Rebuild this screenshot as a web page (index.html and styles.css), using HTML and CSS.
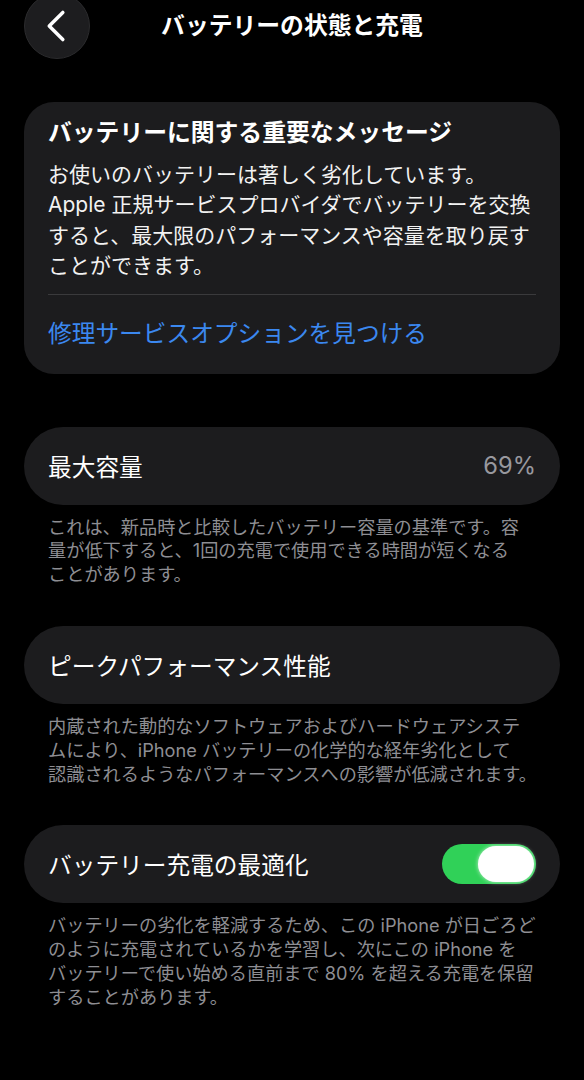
FILE: index.html
```html
<!DOCTYPE html>
<html lang="ja">
<head>
<meta charset="UTF-8">
<meta name="viewport" content="width=device-width, initial-scale=1.0">
<title>バッテリーの状態と充電</title>
<link rel="stylesheet" href="styles.css">
</head>
<body>
<header class="nav">
  <button class="back" aria-label="戻る">
    <svg viewBox="0 0 66 66" width="66" height="66"><path d="M39 19 L25 33 L39 47" fill="none" stroke="#fff" stroke-width="3.6" stroke-linecap="round" stroke-linejoin="round"/></svg>
  </button>
  <h1 class="nav-title">バッテリーの状態と充電</h1>
  <span></span>
</header>
<main class="content">
  <section class="card message">
    <h2>バッテリーに関する重要なメッセージ</h2>
    <p>お使いのバッテリーは著しく劣化しています。<br>Apple 正規サービスプロバイダでバッテリーを交換<br>すると、最大限のパフォーマンスや容量を取り戻す<br>ことができます。</p>
    <hr>
    <a class="link" href="#">修理サービスオプションを見つける</a>
  </section>

  <section class="group">
    <div class="card row"><span>最大容量</span><span class="value">69%</span></div>
    <p class="footnote">これは、新品時と比較したバッテリー容量の基準です。容<br>量が低下すると、1回の充電で使用できる時間が短くなる<br>ことがあります。</p>
  </section>

  <section class="group">
    <div class="card row"><span>ピークパフォーマンス性能</span></div>
    <p class="footnote">内蔵された動的なソフトウェアおよびハードウェアシステ<br>ムにより、iPhone バッテリーの化学的な経年劣化として<br>認識されるようなパフォーマンスへの影響が低減されます。</p>
  </section>

  <section class="group">
    <div class="card row">
      <span>バッテリー充電の最適化</span>
      <span class="switch"><span class="knob"></span></span>
    </div>
    <p class="footnote">バッテリーの劣化を軽減するため、この iPhone が日ごろど<br>のように充電されているかを学習し、次にこの iPhone を<br>バッテリーで使い始める直前まで 80% を超える充電を保留<br>することがあります。</p>
  </section>
</main>
</body>
</html>
```

FILE: styles.css
```css
body {
  margin:0;
  background:#000;
  color:#fff;
  font-family:Inter, "Noto Sans CJK JP", sans-serif;
}
.nav {
  display:grid;
  grid-template-columns:1fr auto 1fr;
  align-items:center;
  height:66px;
  margin-top:-7px;
  padding:0 24px;
}
.back {
  width:66px; height:66px;
  padding:0;
  border-radius:50%;
  border:1px solid #2b2b2d;
  background:#1d1d1f;
  display:flex; align-items:center; justify-content:center;
}
.back svg {display:block;}
.nav-title {margin:0; font-size:23.8px; line-height:30px; font-weight:600; white-space:nowrap;}

.content {padding:43px 24px 40px;}
.card {background:#1c1c1e; border-radius:30px;}

.message {padding:16px 24px 25px; margin-bottom:53px;}
.message h2 {margin:0; font-size:23.8px; line-height:30px; font-weight:700;}
.message p {margin:12px 0 0; font-size:21px; line-height:30.4px; color:#f2f2f2;}
.message hr {margin:12px 0 0; border:0; border-top:1px solid #3a3a3c;}
.link {display:block; margin-top:24px; font-size:23.7px; line-height:30px; color:#3b88f0; text-decoration:none;}

.group + .group {margin-top:39px;}
.row {
  height:78px;
  border-radius:39px;
  box-sizing:border-box;
  padding:0 24px;
  display:flex; align-items:center; justify-content:space-between;
  font-size:23.7px;
}
.value {color:#98989e;}
.switch {
  width:94px; height:40px;
  box-sizing:border-box;
  padding:2px;
  border-radius:20px;
  background:#30d158;
  display:flex; justify-content:flex-end;
}
.knob {width:56px; height:36px; border-radius:18px; background:#fff; box-shadow:0 0 4px rgba(255,255,255,.7);}

.footnote {
  margin:11px 0 0;
  padding:0 10px 0 24px;
  font-size:18.2px;
  line-height:23.8px;
  color:#8e8e93;
  white-space:nowrap;
}
```
